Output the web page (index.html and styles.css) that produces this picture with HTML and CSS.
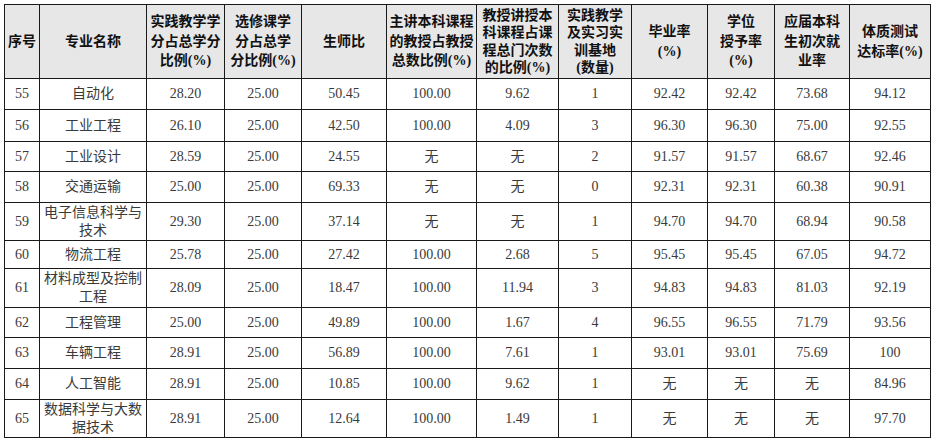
FILE: index.html
```html
<!DOCTYPE html>
<html lang="zh-CN">
<head>
<meta charset="utf-8">
<title>专业数据表</title>
<link rel="stylesheet" href="styles.css">
</head>
<body>
<table class="data">
  <colgroup>
    <col class="c1"><col class="c2"><col class="c3"><col class="c4"><col class="c5"><col class="c6">
    <col class="c7"><col class="c8"><col class="c9"><col class="c10"><col class="c11"><col class="c12">
  </colgroup>
  <thead>
    <tr>
      <th>序号</th>
      <th>专业名称</th>
      <th>实践教学学<br>分占总学分<br>比例(%)</th>
      <th>选修课学<br>分占总学<br>分比例(%)</th>
      <th>生师比</th>
      <th>主讲本科课程<br>的教授占教授<br>总数比例(%)</th>
      <th class="tight">教授讲授本<br>科课程占课<br>程总门次数<br>的比例(%)</th>
      <th class="tight">实践教学<br>及实习实<br>训基地<br>(数量)</th>
      <th>毕业率<br>(%)</th>
      <th>学位<br>授予率<br>(%)</th>
      <th>应届本科<br>生初次就<br>业率</th>
      <th>体质测试<br>达标率(%)</th>
    </tr>
  </thead>
  <tbody>
    <tr class="r31"><td>55</td><td>自动化</td><td>28.20</td><td>25.00</td><td>50.45</td><td>100.00</td><td>9.62</td><td>1</td><td>92.42</td><td>92.42</td><td>73.68</td><td>94.12</td></tr>
    <tr class="r32"><td>56</td><td>工业工程</td><td>26.10</td><td>25.00</td><td>42.50</td><td>100.00</td><td>4.09</td><td>3</td><td>96.30</td><td>96.30</td><td>75.00</td><td>92.55</td></tr>
    <tr class="r30"><td>57</td><td>工业设计</td><td>28.59</td><td>25.00</td><td>24.55</td><td>无</td><td>无</td><td>2</td><td>91.57</td><td>91.57</td><td>68.67</td><td>92.46</td></tr>
    <tr class="r31"><td>58</td><td>交通运输</td><td>25.00</td><td>25.00</td><td>69.33</td><td>无</td><td>无</td><td>0</td><td>92.31</td><td>92.31</td><td>60.38</td><td>90.91</td></tr>
    <tr class="r38"><td>59</td><td>电子信息科学与<br>技术</td><td>29.30</td><td>25.00</td><td>37.14</td><td>无</td><td>无</td><td>1</td><td>94.70</td><td>94.70</td><td>68.94</td><td>90.58</td></tr>
    <tr class="r28"><td>60</td><td>物流工程</td><td>25.78</td><td>25.00</td><td>27.42</td><td>100.00</td><td>2.68</td><td>5</td><td>95.45</td><td>95.45</td><td>67.05</td><td>94.72</td></tr>
    <tr class="r39"><td>61</td><td>材料成型及控制<br>工程</td><td>28.09</td><td>25.00</td><td>18.47</td><td>100.00</td><td>11.94</td><td>3</td><td>94.83</td><td>94.83</td><td>81.03</td><td>92.19</td></tr>
    <tr class="r30"><td>62</td><td>工程管理</td><td>25.00</td><td>25.00</td><td>49.89</td><td>100.00</td><td>1.67</td><td>4</td><td>96.55</td><td>96.55</td><td>71.79</td><td>93.56</td></tr>
    <tr class="r31"><td>63</td><td>车辆工程</td><td>28.91</td><td>25.00</td><td>56.89</td><td>100.00</td><td>7.61</td><td>1</td><td>93.01</td><td>93.01</td><td>75.69</td><td>100</td></tr>
    <tr class="r31"><td>64</td><td>人工智能</td><td>28.91</td><td>25.00</td><td>10.85</td><td>100.00</td><td>9.62</td><td>1</td><td>无</td><td>无</td><td>无</td><td>84.96</td></tr>
    <tr class="r38"><td>65</td><td>数据科学与大数<br>据技术</td><td>28.91</td><td>25.00</td><td>12.64</td><td>100.00</td><td>1.49</td><td>1</td><td>无</td><td>无</td><td>无</td><td>97.70</td></tr>
  </tbody>
</table>
</body>
</html>
```

FILE: styles.css
```css
html, body {
  margin: 0;
  padding: 0;
  background: #ffffff;
}

body {
  padding: 4px 0 0 4px;
  font-family: "Liberation Serif", "Noto Sans CJK SC", serif;
}

.data {
  border-collapse: collapse;
  table-layout: fixed;
  width: 927px;
}

.c1 { width: 35px; }
.c2 { width: 107px; }
.c3 { width: 78px; }
.c4 { width: 77px; }
.c5 { width: 85px; }
.c6 { width: 90px; }
.c7 { width: 82px; }
.c8 { width: 73px; }
.c9 { width: 76px; }
.c10 { width: 67px; }
.c11 { width: 75px; }
.c12 { width: 81px; }

.data th,
.data td {
  border: 1px solid #1a1a1a;
  padding: 0;
  text-align: center;
  vertical-align: middle;
  overflow: hidden;
  white-space: nowrap;
}

.data th {
  background: #e7e7e7;
  color: #111111;
  font-weight: bold;
  font-size: 14px;
  line-height: 19.5px;
  height: 73px;
}

.data th.tight {
  line-height: 17.5px;
}

.data td {
  color: #3a3a3a;
  font-size: 14px;
  line-height: 18px;
}

.r28 td { height: 27px; }
.r30 td { height: 29px; }
.r31 td { height: 30px; }
.r32 td { height: 31px; }
.r38 td { height: 37px; }
.r39 td { height: 38px; }
```
